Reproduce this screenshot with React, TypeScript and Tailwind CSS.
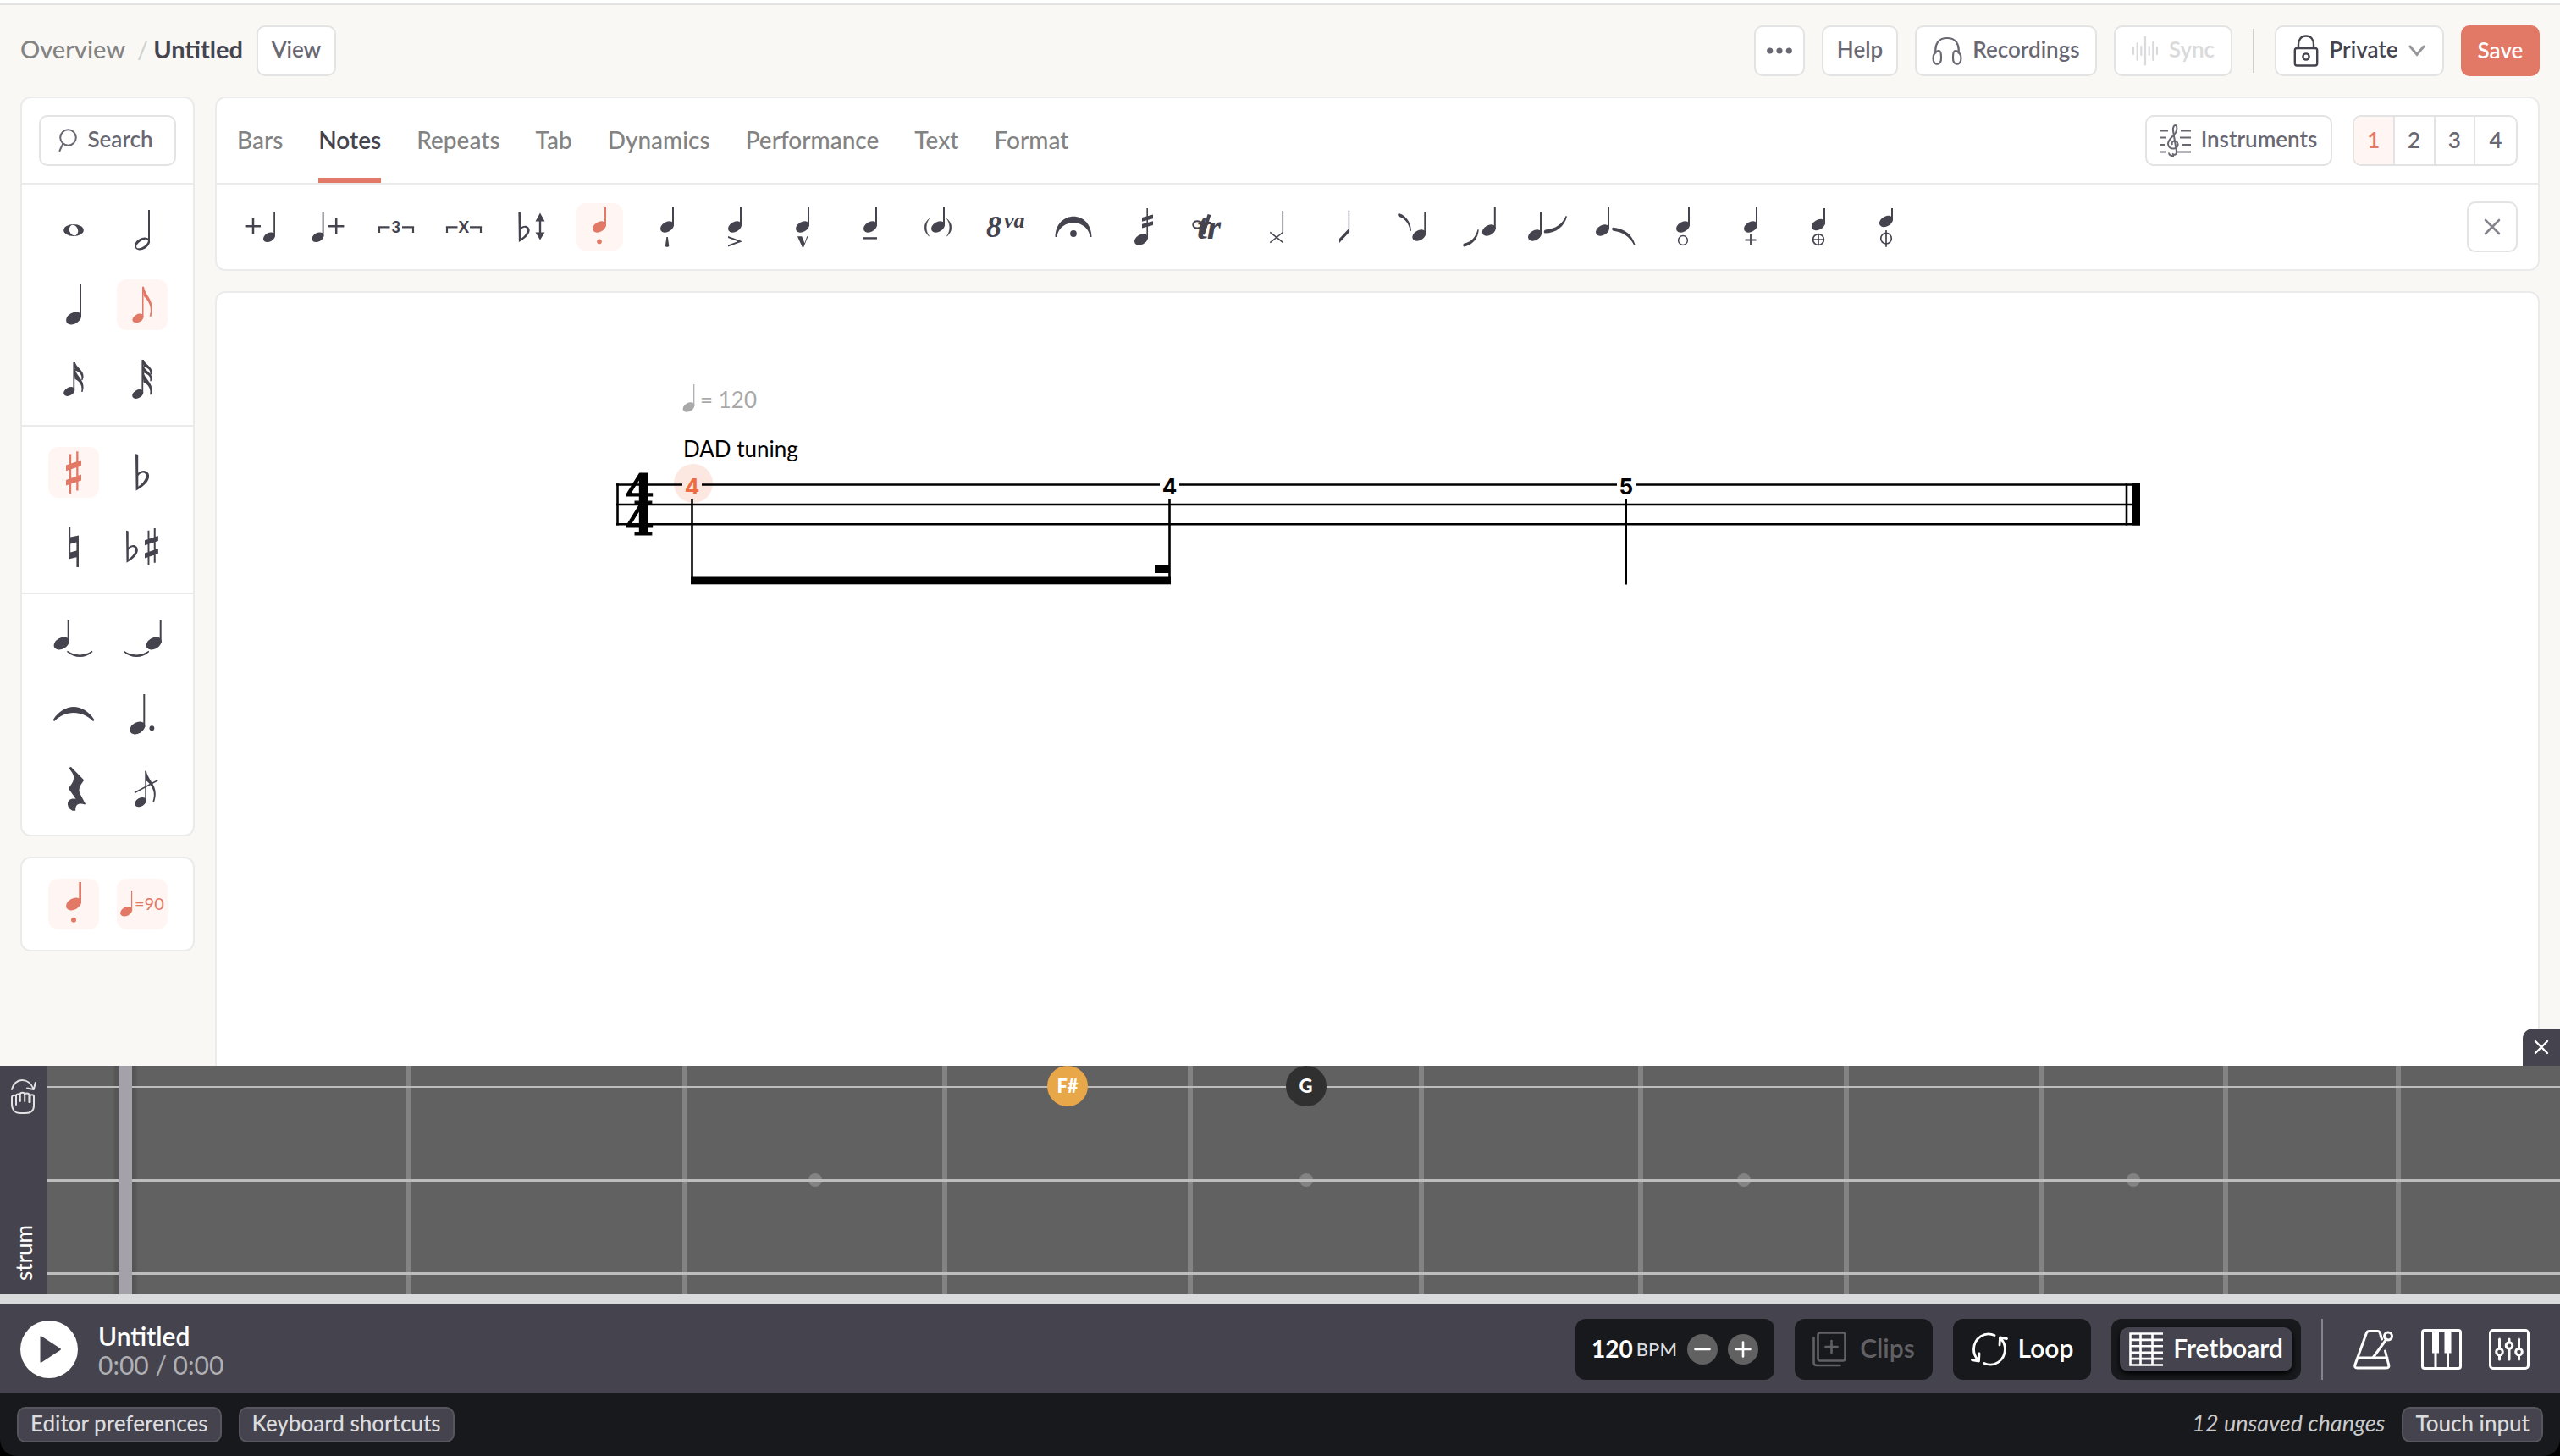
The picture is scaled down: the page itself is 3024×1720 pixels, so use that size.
import type { ReactNode } from 'react';

/* ---------- musical glyph helpers ---------- */

type NoteProps = { x: number; y: number; top: number; size?: number; stem?: number };

// Filled note head centred on (x, y) with its stem rising to `top`.
function Note({ x, y, top, size = 9, stem = 2 }: NoteProps) {
  const right = x + size;
  return (
    <>
      <ellipse cx={x} cy={y} rx={size * 1.08} ry={size * 0.73} transform={`rotate(-30 ${x} ${y})`} />
      <rect x={right - stem} y={top} width={stem} height={y - top - 1} />
    </>
  );
}

const FLAG = 'M30 8.7h2c.6 4.2 3 8.4 5.6 12.2 3 4.6 4.2 9 3.9 13.6-.2 3.4-.4 6.3-.8 9.3h-2c1.2-4.4 1.5-8.4.6-12-1.2-4.7-3.9-9-7.4-11.9z';
const SHORT_FLAG = 'M30 0h1.8c.8 3.4 3.2 5.4 5.4 7.8 2.8 3 4.6 6 4.4 9.6l-1 3.6h-1.4c.8-4-.2-6.6-2.6-8.8-1.8-1.6-3.4-2.4-5-2.8z';
const FLAT = 'M0 0l3.2.8v21.6c2.6-2.4 6.2-3.4 9-2.2 3 1.2 4.4 4 3.8 7.4C15 33.6 8 39 .6 43.2zM3.3 26v12.4c4-2.6 8.2-7 9-11.400.8-3.800-2-5.600-4.800-4.600-1.800.6-3.200 1.800-4.200 3.600z';
const SHARP = 'M4 3.2h2.200v46.600H4zM12.200 0h2.300v46.200h-2.300zM0 16.200l18-6v6.800l-18 6zM0 33.600l18-6.400v7l-18 6z';

const Glyph = ({ size, children }: { size: number; children: ReactNode }) => (
  <svg width={size} height={size} viewBox={`0 0 ${size} ${size}`} fill="currentColor" aria-hidden="true">
    {children}
  </svg>
);

/* ---------- sidebar glyphs (60 x 60) ---------- */

const sidebarGroups: { name: string; active?: boolean; art: ReactNode }[][] = [
  [
    {
      name: 'Whole note',
      art: (
        <>
          <ellipse cx="30" cy="30" rx="11.8" ry="7" />
          <ellipse cx="30" cy="30" rx="5" ry="6.4" transform="rotate(-22 30 30)" fill="#fff" />
        </>
      ),
    },
    {
      name: 'Half note',
      art: (
        <>
          <Note x={30} y={46} top={6} />
          <ellipse cx="30" cy="46" rx="8" ry="3.5" transform="rotate(-34 30 46)" fill="#fff" />
        </>
      ),
    },
    { name: 'Quarter note', art: <Note x={30} y={46} top={6} /> },
    {
      name: 'Eighth note',
      active: true,
      art: (
        <>
          <Note x={25} y={46} top={9} size={6.5} stem={1.5} />
          <path d={FLAG} />
        </>
      ),
    },
    {
      name: 'Sixteenth note',
      art: (
        <>
          <Note x={24.7} y={44.5} top={10} size={6.5} stem={1.8} />
          <path d={SHORT_FLAG} transform="translate(0 10)" />
          <path d={SHORT_FLAG} transform="translate(0 18) scale(1 1.28)" />
        </>
      ),
    },
    {
      name: 'Thirty-second note',
      art: (
        <>
          <Note x={24.7} y={47.5} top={7} size={6.5} stem={1.8} />
          <path d={SHORT_FLAG} transform="translate(0 7) scale(1 .85)" />
          <path d={SHORT_FLAG} transform="translate(0 14.5) scale(1 .85)" />
          <path d={SHORT_FLAG} transform="translate(0 22) scale(1 1.25)" />
        </>
      ),
    },
  ],
  [
    { name: 'Sharp', active: true, art: <path d={SHARP} transform="translate(21 5.3)" /> },
    { name: 'Flat', art: <path d={FLAT} fillRule="evenodd" transform="translate(22 8.3)" /> },
    {
      name: 'Natural',
      art: <path fillRule="evenodd" d="M24 6h2.200v12.600L36 16.600V54h-2.600V42.200L24 44.400zM26.200 26.400v10l7.200-1.800v-10z" />,
    },
    {
      name: 'Respell accidental',
      art: (
        <>
          <path d={FLAT} fillRule="evenodd" transform="translate(11 10.7) scale(.86 .88)" />
          <path d={SHARP} transform="translate(33 8) scale(.88)" />
        </>
      ),
    },
  ],
  [
    {
      name: 'Tie to next note',
      art: (
        <>
          <Note x={15.7} y={34} top={6} />
          <path d="M22 44c9 8 22 8 30.500 0l-.8-1.200c-8.400 6.200-20.500 6.200-28.900 0z" />
        </>
      ),
    },
    {
      name: 'Tie to previous note',
      art: (
        <>
          <Note x={43.7} y={34} top={6} />
          <path d="M7.800 44c9 8 22 8 30.500 0l-.8-1.200c-8.400 6.200-20.500 6.200-28.900 0z" />
        </>
      ),
    },
    {
      name: 'Slur',
      art: <path d="M5.800 36.200C19 16 41 16 54.400 36.200l-1.200 2C40 24.600 20 24.600 7 38.200z" />,
    },
    {
      name: 'Dotted note',
      art: (
        <>
          <Note x={24.3} y={46} top={6} />
          <circle cx="41.4" cy="46.2" r="2.9" />
        </>
      ),
    },
    {
      name: 'Rest',
      art: (
        <path d="M27.200 4.200L41.700 19c.4.600.2 1.200-.2 1.800-4.500 6-6.500 10-3.500 15.600 1.600 3.200 3.800 7 6 11.400l-.8.8c-3.600-1.600-7-1.400-9 .2-1.600 1.400-2.200 4-2 7h-3.600C24.400 53.400 23 50.600 23 47.800c0-4.400 3.600-7.200 9.600-6l-8.200-11.600c-.4-.6-.4-1.200 0-1.800 6.200-7 7-12.400 4-17.400l-3.500-5c-.4-1 1.200-2.800 2.300-1.800z" />
      ),
    },
    {
      name: 'Grace note',
      art: (
        <>
          <Note x={28} y={45.6} top={9} size={6.8} stem={1.5} />
          <path d="M33.400 8.600h1.400c.6 4 2.700 7.700 5 11.400 3.600 5.200 6 10 6 15.400 0 3.600-.8 7-1.800 10.200l-1.600-.4c1.600-5 2-9.400.6-13.400-1.600-4.800-4-8.400-8.200-11.600z" />
          <path d="M20.800 33.800l27.200-14.800.7 1.400-27.300 14.800z" />
        </>
      ),
    },
  ],
];

const recentTools: { name: string; art: ReactNode }[] = [
  {
    name: 'Staccato (recent)',
    art: (
      <>
        <Note x={30} y={30} top={4} stem={2.7} />
        <circle cx="30" cy="48.7" r="3" />
      </>
    ),
  },
  {
    name: 'Tempo 90 (recent)',
    art: (
      <>
        <Note x={11.2} y={38.7} top={14} size={7} stem={1.2} />
        <text x="21" y="36.5" fontSize="20">=90</text>
      </>
    ),
  },
];

/* ---------- toolbar glyphs (56 x 56) ---------- */

const HeadUp = () => <Note x={28} y={28} top={4} size={8} />;

const toolbarGlyphs: { name: string; active?: boolean; art: ReactNode }[] = [
  {
    name: 'Add note before',
    art: (
      <>
        <path d="M9.600 27.200h18.400M19 18v18.500" stroke="currentColor" strokeWidth="2.5" />
        <Note x={38} y={40.3} top={10} size={7} stem={1.8} />
      </>
    ),
  },
  {
    name: 'Add note after',
    art: (
      <>
        <Note x={15.5} y={40.3} top={10} size={7} stem={1.8} />
        <path d="M28 27.200h18.400M37.200 18v18.500" stroke="currentColor" strokeWidth="2.5" />
      </>
    ),
  },
  {
    name: 'Triplet',
    art: (
      <>
        <path d="M8 35v-6.700h12.500M35 28.300h13V35" fill="none" stroke="currentColor" strokeWidth="2.2" />
        <text x="27.8" y="34.5" fontSize="18" fontWeight="900" textAnchor="middle">3</text>
      </>
    ),
  },
  {
    name: 'Custom tuplet',
    art: (
      <>
        <path d="M8 35v-6.700h12.500M35 28.300h13V35" fill="none" stroke="currentColor" strokeWidth="2.2" />
        <text x="27.8" y="34.5" fontSize="18" fontWeight="900" textAnchor="middle">X</text>
      </>
    ),
  },
  {
    name: 'Shift pitch',
    art: (
      <>
        <path d={FLAT} fillRule="evenodd" transform="translate(12.4 10.7) scale(.82)" />
        <path d="M38 18v20" stroke="currentColor" strokeWidth="2.4" />
        <path d="M38 11.500l5.500 10h-11zM38 43.500l5.500-9h-11z" />
      </>
    ),
  },
  { name: 'Staccato', active: true, art: <><HeadUp /><circle cx="28" cy="45.4" r="2.8" /></> },
  { name: 'Staccatissimo', art: <><HeadUp /><path d="M27.300 40h1.600l1.400 11c-.5 1-4 1-4.400 0z" /></> },
  { name: 'Accent', art: <><HeadUp /><path d="M20 39l17 6.300L20 51.600v-2.100l11.500-4.200L20 41.100z" /></> },
  { name: 'Marcato', art: <><HeadUp /><path d="M22 39.300h5.200l3.300 8 2.700-8h1.300L29.300 52h-1.600z" /></> },
  { name: 'Tenuto', art: <><HeadUp /><rect x="20" y="40.2" width="16" height="2.4" /></> },
  {
    name: 'Ghost note',
    art: (
      <>
        <HeadUp />
        <path d="M17.500 18.500c-7 5.500-7 15 0 20.500-4.500-6-4.500-14.500 0-20.500zM38.500 18.500c7 5.500 7 15 0 20.500 4.500-6 4.500-14.500 0-20.500z" stroke="currentColor" strokeWidth=".6" />
      </>
    ),
  },
  {
    name: 'Octave up',
    art: (
      <g fontFamily="'Liberation Serif', serif" fontStyle="italic" fontWeight="700">
        <text x="5" y="40" fontSize="36">8</text>
        <text x="26" y="28.5" fontSize="26">va</text>
      </g>
    ),
  },
  {
    name: 'Fermata',
    art: (
      <>
        <path d="M6.500 40C7 7.500 49 7.500 49.500 40h-1.800C44.500 17.500 11.500 17.500 8.300 40z" />
        <circle cx="28" cy="36" r="3.9" />
      </>
    ),
  },
  {
    name: 'Tremolo',
    art: (
      <>
        <Note x={28} y={43} top={6} size={8} stem={1.6} />
        <path d="M29 17l13-3.500v4.800l-13 3.500zM29 24.700l13-3.500V26l-13 3.500z" />
      </>
    ),
  },
  {
    name: 'Trill',
    art: (
      <g fontFamily="'Liberation Serif', serif" fontStyle="italic" fontWeight="700">
        <text x="14" y="42" fontSize="42">tr</text>
        <path d="M31 22.500c-6 2-11 6.500-16.500 7-3.500.2-5.500-2-5.200-4.500.4-3 3.500-4.500 6.500-3.500 4 1.300 7 3.500 13 1" fill="none" stroke="currentColor" strokeWidth="2" />
        <path d="M28.500 13.500L21 37" fill="none" stroke="currentColor" strokeWidth="4" />
      </g>
    ),
  },
  {
    name: 'Dead note',
    art: <path d="M35.300 9v25.500L20.300 46.700M20.300 34.300l15.400 12.400" fill="none" stroke="currentColor" strokeWidth="1.5" />,
  },
  {
    name: 'Slash note',
    art: <path d="M32.800 8.500h1.300V34L22 47v-5l10.800-11.500z" />,
  },
  {
    name: 'Scoop from above',
    art: (
      <>
        <path d="M12.500 12c8 2.500 14 10 14.500 20.700h-1.200C24.500 24.500 19.500 18 12.800 16c-2-.8-2-3.800-.3-4z" />
        <Note x={36.3} y={38} top={11} size={8} />
      </>
    ),
  },
  {
    name: 'Scoop from below',
    art: (
      <>
        <path d="M9.500 51.400c9-1.500 16.500-9 17.300-20.200h-1.400C23.500 39.500 18 46 9.800 47.400c-1.900.4-2 3.800-.3 4z" />
        <Note x={38.8} y={32} top={5} size={8} />
      </>
    ),
  },
  {
    name: 'Doit',
    art: (
      <>
        <Note x={13} y={38} top={11} size={8} />
        <path d="M25 35.500c13 0 23-8 26-19.800l-1.400-.6C46 25 37 30.500 25.500 31.500c-2 .2-2.300 3.800-.5 4z" />
      </>
    ),
  },
  {
    name: 'Fall',
    art: (
      <>
        <Note x={13} y={32} top={5} size={8} />
        <path d="M25.500 28.800c13 1.200 22.500 8.200 26 20.200l-1.400.6C45.500 40 36.500 34 26 32.800c-2-.2-2.300-4-.5-4z" />
      </>
    ),
  },
  { name: 'Open', art: <><HeadUp /><circle cx="28" cy="44" r="5.4" fill="none" stroke="currentColor" strokeWidth="1.5" /></> },
  { name: 'Plus', art: <><HeadUp /><path d="M21.500 43.500h13M28 37v13" stroke="currentColor" strokeWidth="1.8" /></> },
  {
    name: 'Palm mute',
    art: (
      <>
        <Note x={28} y={25.5} top={6} size={8} />
        <g fill="none" stroke="currentColor" strokeWidth="1.7">
          <circle cx="28" cy="43" r="6.4" />
          <path d="M21.600 43h12.800M28 36.600v12.800" />
        </g>
      </>
    ),
  },
  {
    name: 'Snap pizzicato',
    art: (
      <>
        <Note x={28} y={21.5} top={6} size={8} />
        <g fill="none" stroke="currentColor" strokeWidth="1.7">
          <circle cx="28" cy="41.7" r="6.3" />
          <path d="M28 32v19.700" />
        </g>
      </>
    ),
  },
];

/* ---------- shared controls ---------- */

function Label({ children }: { children: ReactNode }) {
  return <span className="pb-1 whitespace-nowrap">{children}</span>;
}

function LightButton({ children, width, label, tone = 'text-[#696872]' }: { children: ReactNode; width: string; label?: string; tone?: string }) {
  return (
    <button
      type="button"
      aria-label={label}
      className={`flex h-[60px] items-center justify-center gap-3 rounded-[10px] border-2 border-[#e3e3e4] bg-white text-[26px] leading-8 font-semibold ${width} ${tone}`}
    >
      {children}
    </button>
  );
}

function Header() {
  return (
    <header className="flex items-center justify-between p-6">
      <nav aria-label="Breadcrumb" className="flex items-center text-[29px] leading-9">
        <a href="#overview" className="pb-1 font-medium text-[#838383]">Overview</a>
        <span className="pr-1.5 pb-1 pl-3.5 text-[#cfcfcf]">/</span>
        <span className="pr-4 pb-1 font-bold text-[#45444e]">Untitled</span>
        <LightButton width="w-[94px]"><Label>View</Label></LightButton>
      </nav>
      <div className="flex items-center gap-5">
        <LightButton width="w-[60px]" label="More">
          <svg width="30" height="8" viewBox="0 0 30 8" fill="currentColor" aria-hidden="true">
            <circle cx="3.7" cy="4" r="3.6" /><circle cx="15" cy="4" r="3.6" /><circle cx="26.3" cy="4" r="3.6" />
          </svg>
        </LightButton>
        <LightButton width="w-[90px]"><Label>Help</Label></LightButton>
        <LightButton width="w-[215px]">
          <svg width="36" height="36" viewBox="0 0 36 36" fill="none" stroke="currentColor" strokeWidth="2.2" aria-hidden="true">
            <path d="M4.500 21.500C3 10 8 3 18 3s15 7 13.500 18.500" />
            <path d="M9.500 18.500c-4-1.800-8 3-8 8.500 0 5 3 7.500 6 6.500 2.500-.8 3.500-3.500 3.500-7 0-4-.3-7-1.500-8zM26.500 18.500c4-1.800 8 3 8 8.500 0 5-3 7.500-6 6.500-2.500-.8-3.500-3.500-3.500-7 0-4 .3-7 1.500-8z" />
          </svg>
          <Label>Recordings</Label>
        </LightButton>
        <LightButton width="w-[140px]" tone="text-[#dadadc]">
          <svg width="32" height="36" viewBox="0 0 32 36" fill="none" stroke="currentColor" strokeWidth="2.2" strokeLinecap="round" aria-hidden="true">
            <path d="M2 14v8M6.700 9v20M11.300 13v10M16 1.500v33M20.700 13v10M25.300 8v21M30 14v8" />
          </svg>
          <Label>Sync</Label>
        </LightButton>
        <span className="mx-1 h-[52px] w-0.5 bg-[#cfcfcf]" />
        <LightButton width="w-[200px]" tone="text-[#45444e]">
          <svg width="30" height="38" viewBox="0 0 30 38" fill="none" stroke="currentColor" strokeWidth="2.4" aria-hidden="true">
            <rect x="1.8" y="16" width="26.4" height="20.5" rx="2.5" />
            <path d="M6 16v-4.500C6 5.500 9.500 1.500 15 1.500s9 4 9 10V16" />
            <circle cx="15" cy="26" r="3.6" />
          </svg>
          <Label>Private</Label>
          <svg width="20" height="14" viewBox="0 0 20 14" fill="none" stroke="#96969b" strokeWidth="3" strokeLinecap="round" aria-hidden="true">
            <path d="M2 2l8 9.500L18 2" />
          </svg>
        </LightButton>
        <button type="button" className="flex h-[60px] w-[93px] items-center justify-center rounded-[10px] bg-[#e27866] text-[26px] leading-8 font-semibold text-white">
          <span className="pb-0.5">Save</span>
        </button>
      </div>
    </header>
  );
}

function GlyphButton({ name, active, size, children }: { name: string; active?: boolean; size: number; children: ReactNode }) {
  return (
    <button
      type="button"
      aria-label={name}
      aria-pressed={!!active}
      className={active ? 'rounded-xl bg-[#fff5f3] text-[#e27866]' : 'rounded-xl text-[#45444e]'}
    >
      <Glyph size={size}>{children}</Glyph>
    </button>
  );
}

function Sidebar() {
  return (
    <aside className="flex w-[206px] shrink-0 flex-col gap-6">
      <div className="divide-y-2 divide-[#ebebec] rounded-xl border-2 border-[#ebebec] bg-white">
        <div className="p-5">
          <LightButton width="w-full">
            <svg width="22" height="28" viewBox="0 0 22 28" fill="none" stroke="currentColor" strokeWidth="2" strokeLinecap="round" aria-hidden="true">
              <circle cx="11.5" cy="10.5" r="9.3" />
              <path d="M5 18.500L1.500 26" />
            </svg>
            <span className="pr-1 pb-1">Search</span>
          </LightButton>
        </div>
        {sidebarGroups.map((group) => (
          <div key={group[0].name} className="grid grid-cols-[60px_60px] justify-center gap-x-[21px] gap-y-7 py-6">
            {group.map((g) => (
              <GlyphButton key={g.name} name={g.name} active={g.active} size={60}>{g.art}</GlyphButton>
            ))}
          </div>
        ))}
      </div>
      <div className="grid grid-cols-[60px_60px] justify-center gap-x-[21px] rounded-xl border-2 border-[#ebebec] bg-white py-6">
        {recentTools.map((g) => (
          <GlyphButton key={g.name} name={g.name} active size={60}>{g.art}</GlyphButton>
        ))}
      </div>
    </aside>
  );
}

const tabs = ['Bars', 'Notes', 'Repeats', 'Tab', 'Dynamics', 'Performance', 'Text', 'Format'];

function Toolbar() {
  return (
    <section className="rounded-xl border-2 border-[#ebebec] bg-white">
      <div className="flex h-[102px] items-center justify-between border-b-2 border-[#ebebec] px-6">
        <div role="tablist" className="flex h-full gap-[42px] text-[28px] leading-9 font-medium text-[#838383]">
          {tabs.map((t) => (
            <button
              key={t}
              type="button"
              role="tab"
              aria-selected={t === 'Notes'}
              className={t === 'Notes' ? 'border-b-6 border-[#e27866] pt-1 font-semibold text-[#45444e]' : 'pb-0.5'}
            >
              {t}
            </button>
          ))}
        </div>
        <div className="flex gap-6">
          <LightButton width="w-[221px]">
            <svg width="36" height="38" viewBox="0 0 36 38" fill="none" stroke="currentColor" strokeWidth="2" aria-hidden="true">
              <path d="M0 7.500h9M24 7.500h12M0 15.500h6M23 15.500h13M0 24h5M26 24h10M0 32.500h6M20 32.500h16" />
              <path d="M16 37c-3.500.5-6-1-6-3.500M14 34.500c3 2.500 5.500.5 5-2.500L15 7.500C14.500 3.500 16 1 17.500 1c2.500 0 2.500 6 0 9.500-3 4-8.500 7-8.500 12.500 0 4 3.500 6 7 5.500s5-3 4.500-5.500c-.4-2.500-2.500-4-4.500-3.500s-3 2.500-2 4.500" />
            </svg>
            <Label>Instruments</Label>
          </LightButton>
          <div className="grid h-[60px] w-[195px] grid-cols-4 divide-x-2 divide-[#e3e3e4] overflow-hidden rounded-[10px] border-2 border-[#e3e3e4] text-[26px] leading-8 font-semibold text-[#696872]">
            {[1, 2, 3, 4].map((n) => (
              <button key={n} type="button" aria-label={`Voice ${n}`} className={n === 1 ? 'bg-[#fff5f3] pb-0.5 text-[#e27866]' : 'pb-0.5'}>
                {n}
              </button>
            ))}
          </div>
        </div>
      </div>
      <div className="flex h-[100px] items-center justify-between px-6">
        <div className="flex gap-6">
          {toolbarGlyphs.map((g) => (
            <GlyphButton key={g.name} name={g.name} active={g.active} size={56}>{g.art}</GlyphButton>
          ))}
        </div>
        <LightButton width="w-[60px]" label="Close toolbar" tone="text-[#85848c]">
          <svg width="20" height="20" viewBox="0 0 20 20" stroke="currentColor" strokeWidth="2.6" strokeLinecap="round" aria-hidden="true">
            <path d="M2 2l16 16M18 2L2 18" />
          </svg>
        </LightButton>
      </div>
    </section>
  );
}

function Score() {
  return (
    <section aria-label="Score" className="flex-1 rounded-t-xl border-2 border-b-0 border-[#ebebec] bg-white px-6 pt-[100px]">
      <svg className="mx-auto block overflow-visible" width="1798" height="250" viewBox="0 0 1798 250" role="img" aria-label="Four four tablature">
        <g fill="#a9a9a9">
          <Note x={85.5} y={35} top={8} size={6.8} stem={1.2} />
          <text x="99" y="35.5" fontSize="26">= 120</text>
        </g>
        <text x="79" y="93.5" fontSize="26">DAD tuning</text>
        <circle cx="91" cy="125" r="23" fill="#fce8e1" />
        <g stroke="#000" strokeWidth="2.6" fill="none">
          <path d="M0 126.500h78M101 126.500h541M665 126.500h517M1205 126.500h595M0 150h1800M0 173.200h1800" />
          <path d="M1.500 125.200v49.300M1784 125.200v49.300" />
          <path d="M89.500 143v101M653.500 143v101M1192.700 143v101.500" />
        </g>
        <rect x="1791" y="125" width="9" height="49.5" />
        <rect x="88" y="235.5" width="567" height="8.8" />
        <rect x="636" y="222" width="18" height="9" />
        <g fontFamily="Inter, sans-serif" fontWeight="700" fontSize="26" textAnchor="middle">
          <text x="89.5" y="138" fill="#ee6c43">4</text>
          <text x="653.5" y="138">4</text>
          <text x="1192.7" y="138">5</text>
        </g>
        <text fontFamily="'DejaVu Serif', serif" fontWeight="700" fontSize="49" textAnchor="middle" stroke="#000" strokeWidth="1.2">
          <tspan x="27.5" y="149">4</tspan>
          <tspan x="27.5" y="185.5">4</tspan>
        </text>
      </svg>
    </section>
  );
}

/* ---------- fretboard ---------- */

// Relative widths of the fret spaces, from the nut towards the body.
const frets: { width: number; inlay?: boolean; note?: string; selected?: boolean }[] = [
  { width: 324 },
  { width: 320 },
  { width: 301, inlay: true },
  { width: 284, note: 'F#', selected: true },
  { width: 267, inlay: true, note: 'G' },
  { width: 253 },
  { width: 237, inlay: true },
  { width: 224 },
  { width: 212, inlay: true },
  { width: 198 },
];

function Fretboard() {
  return (
    <section aria-label="Fretboard" className="relative flex h-[270px]">
      <button type="button" aria-label="Close fretboard" className="absolute -top-11 right-0 flex h-11 w-11 items-center justify-center rounded-tl-xl bg-[#45444e] text-white">
        <svg width="18" height="18" viewBox="0 0 18 18" stroke="currentColor" strokeWidth="2.4" strokeLinecap="round" aria-hidden="true">
          <path d="M2 2l14 14M16 2L2 16" />
        </svg>
      </button>
      <div className="flex w-14 shrink-0 flex-col items-center justify-between bg-[#45444e] py-4 text-[#e2e2e4]">
        <svg width="32" height="42" viewBox="0 0 32 42" fill="none" stroke="currentColor" strokeWidth="2" strokeLinecap="round" strokeLinejoin="round" aria-hidden="true">
          <path d="M2 12C5-2 22-3 27.500 11.500M20 10.500l7.800 1.500 2-8" />
          <path d="M7 30v-9.500c0-2.500-5-2.500-5 1V29c0 7 4 11 10 11h6c6 0 10-3 10-9V20.500c0-3-4.500-3-4.500 0V27M7 24v-4.500c0-2.800 4.800-2.800 4.800 0V26M11.800 19v-1c0-3 5.400-3 5.400 0v8M17.200 18.500c0-2.800 5.200-2.800 5.200 0V27" />
        </svg>
        <span className="rotate-180 text-[26px] leading-8 text-white [writing-mode:vertical-rl]">strum</span>
      </div>
      <div className="relative flex flex-1 overflow-hidden bg-[#616161]">
        <div className="w-[84px] shrink-0" />
        <div className="w-4 shrink-0 shadow-[0_0_2px_5px_#555555]">
          <div className="relative z-10 h-full bg-[#a5a1a8]" />
        </div>
        {frets.map((f, i) => (
          <div key={i} className="relative flex basis-0 items-center justify-center border-r-6 border-[#838383]" style={{ flexGrow: f.width }}>
            {f.inlay && <span className="size-4 rounded-full bg-[#838383]" />}
            {f.note && (
              <span
                className={
                  f.selected
                    ? 'absolute top-0 z-20 flex size-12 items-center justify-center rounded-full bg-[#e8a748] pb-0.5 text-[22px] font-black text-white'
                    : 'absolute top-0 z-20 flex size-12 items-center justify-center rounded-full bg-[#303030] pb-0.5 text-[22px] font-black text-white'
                }
              >
                {f.note}
              </span>
            )}
          </div>
        ))}
        <div className="basis-0" style={{ flexGrow: 188 }} />
        <div className="absolute inset-x-0 top-6 h-0.5 bg-[#bdbdbd]" />
        <div className="absolute inset-x-0 top-[134px] h-[3px] bg-[#bdbdbd]" />
        <div className="absolute inset-x-0 top-[244px] h-[3px] bg-[#bdbdbd]" />
      </div>
    </section>
  );
}

/* ---------- player and footer ---------- */

function PlayerBar() {
  return (
    <section aria-label="Player" className="flex h-[105px] items-center bg-[#45444e] pr-9 pl-6 text-white">
      <button type="button" aria-label="Play" className="flex size-[68px] items-center justify-center rounded-full bg-white text-[#45444e]">
        <svg width="28" height="32" viewBox="0 0 28 32" fill="currentColor" aria-hidden="true">
          <path d="M3.500 1.200v29.600a1 1 0 0 0 1.500.8L27.200 17a1.200 1.200 0 0 0 0-2L5 .4a1 1 0 0 0-1.500.8z" />
        </svg>
      </button>
      <div className="ml-6 flex flex-col pt-0.5 text-[30px] leading-[34px]">
        <span className="font-semibold">Untitled</span>
        <span className="text-[#b0b0b4]">0:00 / 0:00</span>
      </div>
      <div className="ml-auto flex items-center gap-6 text-[30px] leading-9 font-semibold">
        <div className="flex h-[72px] w-[235px] items-center justify-center rounded-xl bg-[#18191c]">
          <span className="pb-0.5 text-[28px] font-bold">120</span>
          <span className="pl-1 text-[22px] font-medium text-[#dcdcde]">BPM</span>
          <button type="button" aria-label="Slower" className="ml-3 flex size-9 items-center justify-center rounded-full bg-[#616161]">
            <svg width="20" height="20" viewBox="0 0 20 20" stroke="currentColor" strokeWidth="2.6" strokeLinecap="round" aria-hidden="true"><path d="M1.500 10h17" /></svg>
          </button>
          <button type="button" aria-label="Faster" className="ml-3 flex size-9 items-center justify-center rounded-full bg-[#616161]">
            <svg width="20" height="20" viewBox="0 0 20 20" stroke="currentColor" strokeWidth="2.6" strokeLinecap="round" aria-hidden="true"><path d="M1.500 10h17M10 1.500v17" /></svg>
          </button>
        </div>
        <button type="button" className="flex h-[72px] w-[163px] items-center justify-center gap-4 rounded-xl bg-[#18191c] text-[#616165]">
          <svg width="40" height="42" viewBox="0 0 40 42" fill="none" stroke="currentColor" strokeWidth="2.6" strokeLinecap="round" strokeLinejoin="round" aria-hidden="true">
            <rect x="6.5" y="1.5" width="32" height="33" rx="2.5" />
            <path d="M1.500 7.500v29c0 2.500 1 3.500 3.500 3.500h27.500M22.500 11v14M15.500 18h14" />
          </svg>
          <Label>Clips</Label>
        </button>
        <button type="button" className="flex h-[72px] w-[163px] items-center justify-center gap-3 rounded-xl bg-[#18191c]">
          <svg width="44" height="40" viewBox="0 0 44 40" fill="none" stroke="currentColor" strokeWidth="2.8" strokeLinecap="round" strokeLinejoin="round" aria-hidden="true">
            <path d="M28 3.500C17-1.500 4 6 3.500 20c0 4 1.500 8.500 4.500 12M1.500 32.500l8 1.500.5-9" />
            <path d="M16 36.500c11 5 24-2.500 24.500-16.500 0-4-1.500-8.500-4.500-12M42.500 7.500l-8-1.500-.5 9" />
          </svg>
          <Label>Loop</Label>
        </button>
        <div className="flex h-[72px] items-center rounded-xl bg-[#18191c] px-2.5">
          <button type="button" aria-pressed="true" className="flex h-[52px] w-[204px] items-center justify-center gap-3 rounded-[10px] bg-[#45444e] shadow-[0_3px_6px_#000]">
            <svg width="40" height="40" viewBox="0 0 40 40" fill="none" stroke="currentColor" strokeWidth="2.6" aria-hidden="true">
              <path d="M40 1.500H1.500v37H40M1.500 8.900H40M1.500 16.300H40M1.500 23.700H40M1.500 31.100H40M13.500 1.500v37M27.500 1.500v37" />
            </svg>
            <Label>Fretboard</Label>
          </button>
        </div>
        <span className="h-[72px] w-0.5 bg-[#85848c]" />
        <div className="ml-3 flex items-center gap-8">
          <button type="button" aria-label="Metronome">
            <svg width="48" height="48" viewBox="0 0 48 48" fill="none" stroke="currentColor" strokeWidth="3" strokeLinecap="round" strokeLinejoin="round" aria-hidden="true">
              <path d="M33.500 12L31.500 5c-.6-2-1.200-2.500-3-2.500H18.500c-1.800 0-2.500.6-3.200 2.500L2 42c-.8 2.500 0 4 2.500 4H39c2.500 0 3.300-1.500 2.600-4L37.500 26M6 34h34M23 34l16-22" />
              <circle cx="41" cy="8.5" r="4.5" />
            </svg>
          </button>
          <button type="button" aria-label="Piano">
            <svg width="48" height="48" viewBox="0 0 48 48" fill="none" stroke="currentColor" strokeWidth="3" aria-hidden="true">
              <rect x="1.5" y="1.5" width="45" height="45" rx="2.5" />
              <path d="M17 28v18M31.500 28v18" />
              <path d="M13 1.500h8v27h-8zM27.500 1.500h8v27h-8z" fill="currentColor" stroke="none" />
            </svg>
          </button>
          <button type="button" aria-label="Mixer">
            <svg width="48" height="48" viewBox="0 0 48 48" fill="none" stroke="currentColor" strokeWidth="3" strokeLinecap="round" aria-hidden="true">
              <rect x="1.5" y="1.5" width="45" height="45" rx="3.5" />
              <path d="M12.500 12v11M12.500 31v5M24 12v4M24 24v12M35.500 12v11M35.500 31v5" />
              <circle cx="12.5" cy="27" r="3.8" /><circle cx="24" cy="19.5" r="3.8" /><circle cx="35.5" cy="27" r="3.8" />
            </svg>
          </button>
        </div>
      </div>
    </section>
  );
}

function DarkButton({ children }: { children: ReactNode }) {
  return (
    <button type="button" className="flex h-[42px] items-center rounded-[10px] border-2 border-[#57565f] bg-[#45444e] px-3.5 text-[26px] font-medium text-[#dcdcde]">
      <Label>{children}</Label>
    </button>
  );
}

function Footer() {
  return (
    <footer className="bg-black">
      <div className="flex h-[74px] items-center gap-5 rounded-b-[20px] bg-[#18191c] px-5 text-[27px] leading-8">
        <DarkButton>Editor preferences</DarkButton>
        <DarkButton>Keyboard shortcuts</DarkButton>
        <span className="ml-auto pb-1 text-[#c9c9cb] italic">12 unsaved changes</span>
        <DarkButton>Touch input</DarkButton>
      </div>
    </footer>
  );
}

export default function App() {
  return (
    <div className="flex min-h-screen flex-col bg-[#f9f8f5] font-[Lato,sans-serif] text-black">
      <div className="h-1.5 border-b-2 border-[#e3e3e4] bg-white" />
      <Header />
      <main className="flex flex-1 gap-6 px-6">
        <Sidebar />
        <div className="flex min-w-0 flex-1 flex-col gap-6">
          <Toolbar />
          <Score />
        </div>
      </main>
      <Fretboard />
      <div className="h-3 bg-[#d9dadc]" />
      <PlayerBar />
      <Footer />
    </div>
  );
}
